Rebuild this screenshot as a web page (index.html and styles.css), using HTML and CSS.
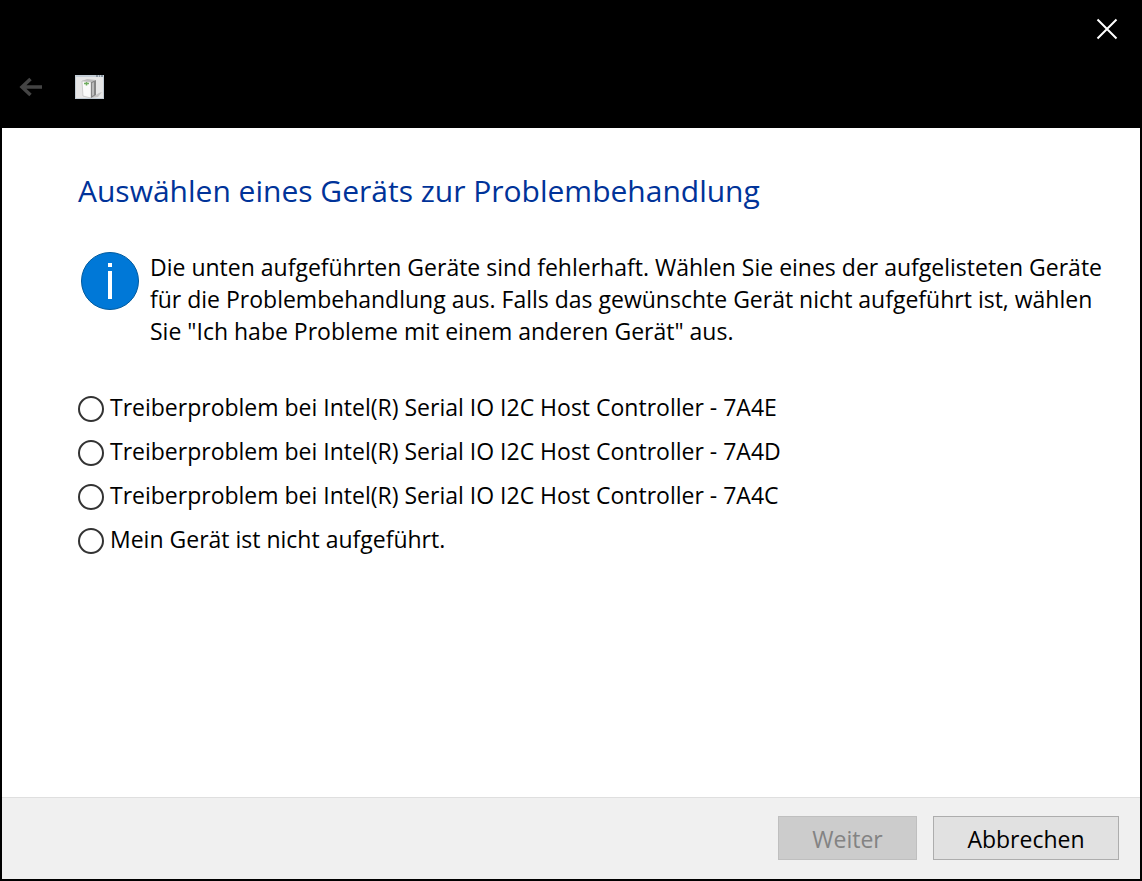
FILE: index.html
```html
<!DOCTYPE html>
<html lang="de">
<head>
  <meta charset="UTF-8">
  <meta name="viewport" content="width=device-width, initial-scale=1.0">
  <title>Problembehandlung</title>
  <link rel="stylesheet" href="styles.css">
</head>
<body>
  <form class="wizard">
    <header class="titlebar">
      <button type="button" class="close" aria-label="Schließen">
        <svg width="22" height="22" viewBox="0 0 22 22"><path d="M1.5 1.5l19 19M20.5 1.5l-19 19" stroke="#fff" stroke-width="2" fill="none"/></svg>
      </button>
      <div class="nav">
        <button type="button" class="back" aria-label="Zurück" disabled>
          <svg width="25" height="20" viewBox="0 0 25 20"><path d="M24 10H5M12.500 2L4 10l8.500 8" stroke="#444" stroke-width="3.500" fill="none"/></svg>
        </button>
        <svg class="app-icon" width="29" height="24" viewBox="0 0 29 24">
          <rect width="29" height="24" fill="#c3cdd6"/>
          <rect x="1" y="2" width="27" height="21" fill="#e6e6e6"/>
          <path d="M21 1h2M24 1h1M26 1h2" stroke="#53606c"/>
          <path d="M16 23l8-5 3-1-4 5z" fill="#c4c4c4"/>
          <path d="M7 6l5-2 9 1-5 2z" fill="#bdbdbd"/>
          <path d="M7 6l9 1v16l-8-2z" fill="#fafafa" stroke="#aaa" stroke-width=".5"/>
          <path d="M16 7l5-2v15l-5 3z" fill="#858585"/>
          <path d="M17 8l2-1v13l-2 1z" fill="#bbb"/>
          <path d="M9 8.500h5M11.500 7v3.500" stroke="#70ad60" stroke-width="1.500"/>
        </svg>
      </div>
    </header>

    <main class="content">
      <h1>Auswählen eines Geräts zur Problembehandlung</h1>

      <div class="info">
        <svg class="info-icon" width="60" height="60" viewBox="0 0 60 60">
          <circle cx="30" cy="30" r="28.5" fill="#0078d7" stroke="#005a9e"/>
          <path d="M30 12v4M30 20v28" stroke="#fff" stroke-width="4"/>
        </svg>
        <p>Die unten aufgeführten Geräte sind fehlerhaft. Wählen Sie eines der aufgelisteten Geräte für die Problembehandlung aus. Falls das gewünschte Gerät nicht aufgeführt ist, wählen Sie "Ich habe Probleme mit einem anderen Gerät" aus.</p>
      </div>

      <div class="devices">
        <label><input type="radio" name="device" value="7A4E"> Treiberproblem bei Intel(R) Serial IO I2C Host Controller - 7A4E</label>
        <label><input type="radio" name="device" value="7A4D"> Treiberproblem bei Intel(R) Serial IO I2C Host Controller - 7A4D</label>
        <label><input type="radio" name="device" value="7A4C"> Treiberproblem bei Intel(R) Serial IO I2C Host Controller - 7A4C</label>
        <label><input type="radio" name="device" value="other"> Mein Gerät ist nicht aufgeführt.</label>
      </div>
    </main>

    <footer class="actions">
      <button type="submit" class="btn next" disabled>Weiter</button>
      <button type="button" class="btn cancel">Abbrechen</button>
    </footer>
  </form>
</body>
</html>
```

FILE: styles.css
```css
* {
  box-sizing: border-box;
}

body {
  margin: 0;
  font-family: "Open Sans", "Noto Sans", sans-serif;
  font-size: 23px;
  color: #000;
}

.wizard {
  display: flex;
  flex-direction: column;
  min-height: 100vh;
  border: 2px solid #000;
  background: #fff;
}

.titlebar {
  display: flex;
  flex-direction: column;
  gap: 35px;
  padding: 16px 22px 29px 16px;
  background: #000;
}

.close,
.back {
  display: flex;
  padding: 0;
  border: none;
  background: none;
}

.close {
  align-self: flex-end;
}

.nav {
  display: flex;
  align-items: center;
  gap: 32px;
}

.content {
  flex: 1;
  padding: 40px 20px 40px 76px;
}

h1 {
  margin: 0;
  font-size: 30px;
  line-height: 46px;
  font-weight: 400;
  color: #003399;
}

.info {
  display: flex;
  gap: 10px;
  margin: 37px 0 0 2px;
}

.info-icon {
  flex: none;
}

.info p {
  margin: 0;
  line-height: 32px;
}

.devices {
  display: flex;
  flex-direction: column;
  margin-top: 38px;
}

.devices label {
  display: flex;
  align-items: center;
  gap: 6px;
  line-height: 44px;
}

.devices input {
  appearance: none;
  width: 26px;
  height: 26px;
  margin: 4px 0 0;
  border: 2px solid #333;
  border-radius: 50%;
  background: #fff;
}

.devices input:checked {
  box-shadow: inset 0 0 0 5px #fff;
  background: #333;
}

.actions {
  display: flex;
  justify-content: flex-end;
  gap: 16px;
  padding: 18px 21px 19px;
  border-top: 1px solid #dfdfdf;
  background: #f0f0f0;
}

.btn {
  height: 44px;
  padding: 2px 6px 0;
  border: 1px solid #adadad;
  background: #e1e1e1;
  color: #000;
  font: inherit;
}

.btn:disabled {
  border-color: #bfbfbf;
  background: #ccc;
  color: #838383;
}

.next {
  width: 139px;
}

.cancel {
  width: 186px;
}
```
